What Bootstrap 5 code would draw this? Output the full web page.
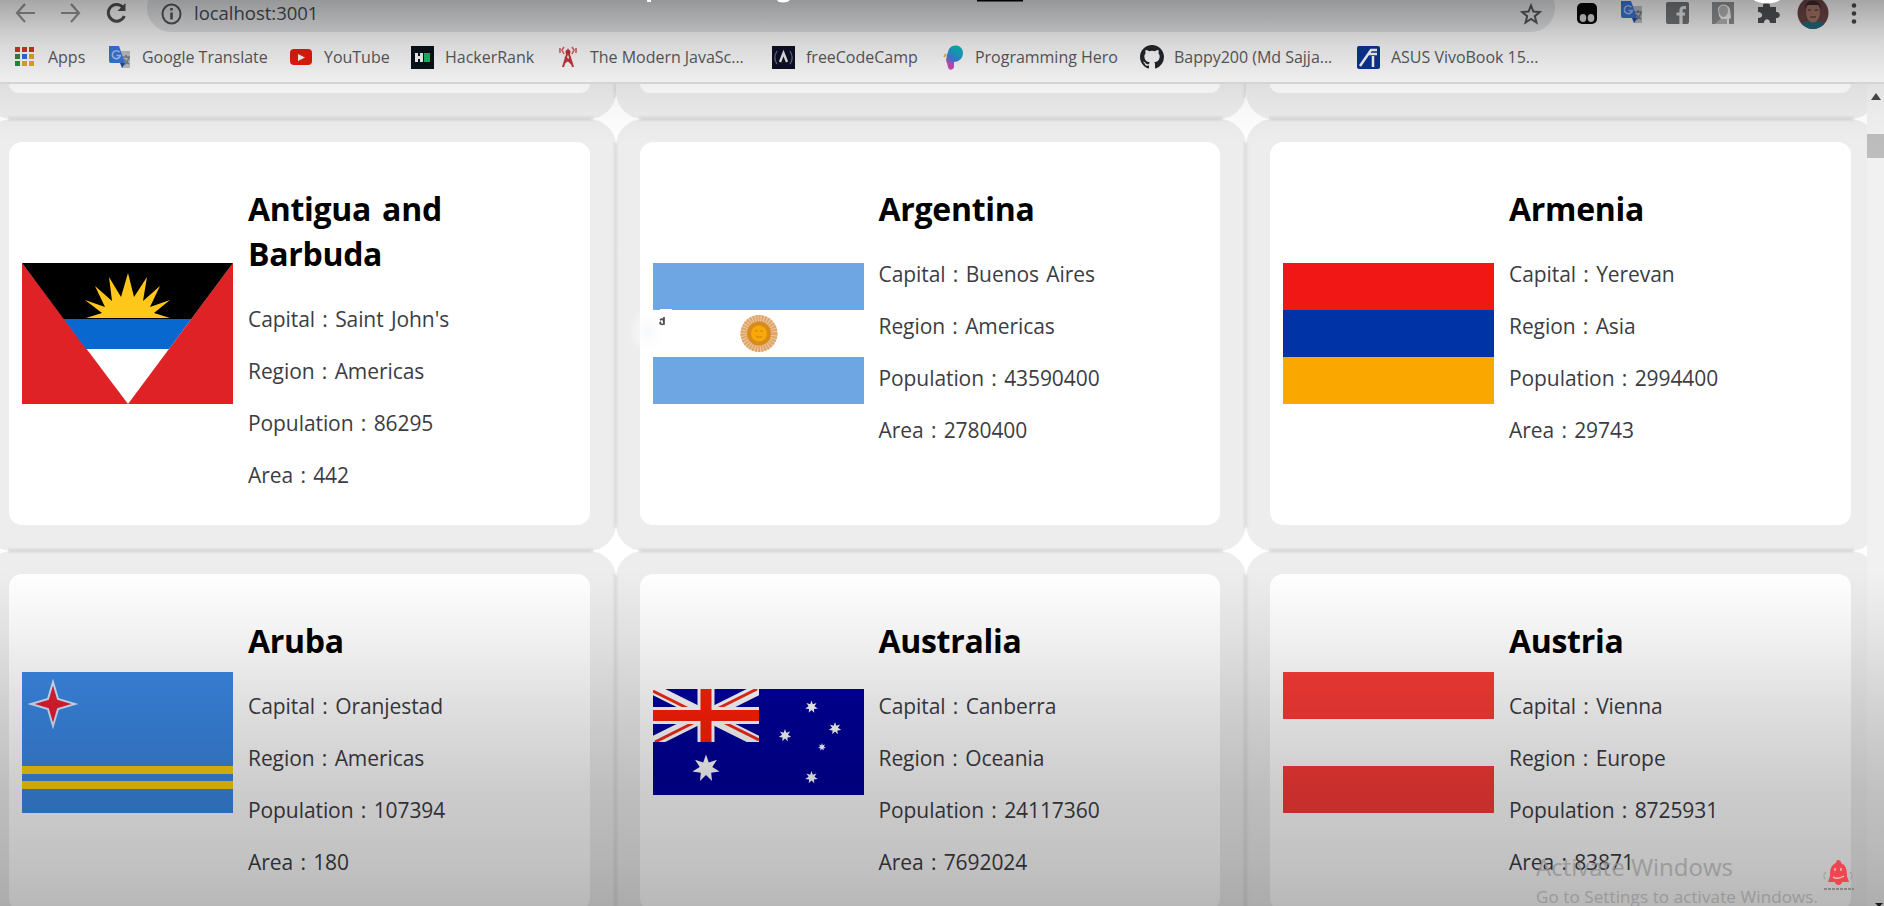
<!DOCTYPE html>
<html lang="en">
<head>
<meta charset="utf-8">
<title>Countries</title>
<link href="https://cdn.jsdelivr.net/npm/bootstrap@5.3.0/dist/css/bootstrap.min.css" rel="stylesheet">
<style>
html,body{height:906px;overflow:hidden}
body{font-family:"Open Sans","Noto Sans",sans-serif;background:#fff;color:#3c3c44;width:1884px}
svg{display:block;flex:none}
.shade-top{left:0;top:0;width:100%;height:145px;pointer-events:none;background:linear-gradient(rgba(0,0,0,.35) 0,rgba(0,0,0,.2) 32px,rgba(0,0,0,.15) 45px,rgba(0,0,0,.065) 80px,rgba(0,0,0,.03) 108px,transparent)}
.shade-bottom{left:0;bottom:0;width:100%;height:336px;pointer-events:none;background:linear-gradient(transparent 0,rgba(0,0,0,.055) 66px,rgba(0,0,0,.13) 140px,rgba(0,0,0,.2) 220px,rgba(0,0,0,.24) 290px,rgba(0,0,0,.28) 336px)}
.browser-top{height:84px;border-bottom:2px solid #e2e2e2}
.bar-row{height:32px;padding-left:15px}
.bar-row>svg{margin-top:2px}
.address{width:1408px;height:48px;margin:-16px 0 0 20px;padding:16px 13px 0 14px;border-radius:24px;background:#e5e7ea;color:#484b50;font-size:18.5px;letter-spacing:-.02px}
.address>*{margin-top:-6px}
.address svg{margin-top:-5px}
.address span{line-height:26px}
.ext{gap:22px;margin-left:21px}
.marks{height:50px;padding:0 0 0 14px;font-size:16px;letter-spacing:-.02px;color:#5b5c62}
.mk{gap:10px;white-space:nowrap}
.m1{width:94px}.m2{width:182px}.m3{width:121px}.m4{width:145px}.m5{width:216px}.m6{width:169px}.m7{width:199px}.m8{width:217px}
.viewport{height:822px}
.page-area{width:1867px;overflow:hidden}
.country-grid{display:grid;grid-template-columns:repeat(3,630.5px);grid-template-rows:35px 431.5px 386px;margin-left:-15px}
.cell{position:relative;border-radius:27px;padding:23px 26px 26px 24px;
background:linear-gradient(transparent,#d7d7d7) center bottom/calc(100% - 46px) 4px no-repeat,
linear-gradient(#d9d9d9,transparent) center top/calc(100% - 46px) 3px no-repeat,
linear-gradient(90deg,transparent,#dbdbdb) right center/4px calc(100% - 46px) no-repeat,
linear-gradient(90deg,#dfdfdf,transparent) left center/3px calc(100% - 46px) no-repeat,#ededed}
.cut{border-radius:0 0 27px 27px;padding-top:0;background:linear-gradient(transparent,#d9d9d9) center bottom/calc(100% - 46px) 4px no-repeat,linear-gradient(90deg,transparent,#dbdbdb) right top/4px 14px no-repeat,#ededed}
.panel{background:#fff;border-radius:13px;height:100%;padding-left:13px}
.cut .panel{border-radius:0 0 13px 13px}
.flagbox{width:211px}
.facts{width:260px;padding-top:44px;margin-left:15px;align-self:flex-start}
.facts h2{font-size:32px;line-height:45px;font-weight:700;color:#000;margin:0 0 28px;letter-spacing:-.3px;word-spacing:3px}
.facts p{font-size:21px;line-height:30px;margin:0 0 22px;white-space:nowrap;letter-spacing:-.08px;word-spacing:2px}
.scroller{width:17px;background:#f1f1f1}
.scroller .thumb{height:24px;background:#bdbdbd;margin-top:30px}
.notice{left:1536px;top:849px;color:#929292;white-space:nowrap;opacity:.8}
.notice .big{font-size:24px;line-height:36px}
.notice .sub{font-size:17px;line-height:20px;letter-spacing:.1px;margin-top:2px}
</style>
<script src="https://cdn.jsdelivr.net/npm/bootstrap@5.3.0/dist/js/bootstrap.bundle.min.js"></script>
</head>
<body class="position-relative">
<svg width="0" height="0" class="position-absolute"><defs>
<symbol id="translate" viewBox="0 0 24 24"><path d="M10 6h12v17H14z" fill="#c3c6ca"/><path d="M14 12h8M18 10v3M15 20c3-1 5-4 6-8M16 14c1 3 3 4 5 5" stroke="#7c858f" stroke-width="1.6" fill="none"/><path d="M1 1h10l6 17H3a2 2 0 0 1-2-2z" fill="#3b78e0"/><path d="m12 18 5 0-3 5z" fill="#2449a6"/><path d="M11.500 7.200a4 4 0 1 0 .8 3.300H8.500" stroke="#a9c6fa" stroke-width="1.600" fill="none"/></symbol>
<symbol id="star7" viewBox="-10 -10 20 20"><path fill="#fff" d="M0-10 2-4.200 7.800-6.200 4.500-1 9.700 2.200 3.700 3 4.300 9 0 4.700-4.300 9-3.700 3-9.700 2.200-4.500-1-7.800-6.200-2-4.200z"/></symbol>
</defs></svg>

<header class="browser-top bg-white overflow-hidden">
  <div class="bar-row d-flex align-items-start">
    <svg width="21" height="22" fill="none" stroke="#98999b" stroke-width="2.200"><path d="M20 11H2M10 2 2 11l8 9"/></svg>
    <svg class="ms-4" width="21" height="22" fill="none" stroke="#98999b" stroke-width="2.200"><path d="M1 11h18M11 2l8 9-8 9"/></svg>
    <svg class="ms-4" width="22" height="22" fill="none" stroke="#505254" stroke-width="3"><path d="M18 5.500A8.300 8.300 0 1 0 19.300 14"/><path d="M20.500 1v8h-8z" fill="#505254" stroke="none"/></svg>
    <div class="address d-flex align-items-center">
      <svg width="21" height="22" fill="none" stroke="#56585a" stroke-width="2"><ellipse cx="10.500" cy="11" rx="9" ry="9.500"/><path d="M10.500 9.500v7M10.500 5v2.400" stroke-width="2.600"/></svg>
      <span class="ms-2 ps-1">localhost:3001</span>
      <svg class="ms-auto" width="22" height="22" viewBox="0 0 22 22" fill="none" stroke="#56585a" stroke-width="2"><path d="m11 2.500 2.400 6 6.400.5-5 4.200 1.700 6.300-5.500-3.500-5.500 3.500 1.700-6.300-5-4.200 6.400-.5z"/></svg>
    </div>
    <div class="ext d-flex align-items-start">
      <svg width="22" height="24"><rect x="1" y="3" width="20" height="21" rx="5" fill="#080808"/><ellipse cx="7" cy="18" rx="3.300" ry="4" fill="#ddd"/><ellipse cx="15" cy="18" rx="3.300" ry="4" fill="#ddd"/></svg>
      <svg width="24" height="24"><use href="#translate"/></svg>
      <svg width="24" height="24"><rect y="2" width="23" height="22" rx="2" fill="#77797c"/><path d="M20 7.500h-2c-2 0-3 1-3 3V24M10.500 14H19" stroke="#eee" stroke-width="3.200" fill="none"/></svg>
      <svg width="24" height="24"><path d="M0 2h22v22h-5V19l2-1-1-9c-2-6-11-6-12 0l1 7 3 4-7 4H0z" fill="#939597"/><path d="M7 10c0-6 9-6 9 0 0 4-2 7-4.500 7S7 14 7 10M3 24l5-5h7v5z" fill="#bdbdbd"/></svg>
      <svg width="22" height="24"><path d="M0 7h5c-1-6 8-6 7 0h6v5c5-1 5 7 0 6v5h-6c0-5-6-5-6 0H0v-5c6 0 5-6 0-6z" fill="#535456"/></svg>
      <svg width="32" height="30" style="margin-left:-5px" viewBox="0 0 32 30"><defs><clipPath id="face"><ellipse cx="16" cy="13" rx="15.500" ry="16"/></clipPath></defs><g clip-path="url(#face)"><path fill="#6e4547" d="M0-4h32v36H0z"/><path fill="#206c7c" d="M0 32c1-10 8-11 16-11s15 2 16 11z"/><ellipse cx="16" cy="12" rx="7" ry="10.500" fill="#a97767"/><path d="M8 9C7-2 25-2 24 9l-2-4H10z" fill="#382b30"/><path d="M11 10h3m4 0h3M13 17h6" stroke="#654442" stroke-width="1.500"/></g></svg>
      <svg width="6" height="26" fill="#4a4c4e"><circle cx="3" cy="5.500" r="2.300"/><circle cx="3" cy="13.500" r="2.300"/><circle cx="3" cy="21.500" r="2.300"/></svg>
    </div>
  </div>
  <nav class="marks d-flex align-items-center">
    <div class="mk m1 d-flex align-items-center"><svg width="24" height="24" viewBox="0 0 24 24"><g fill="#d6362c"><path d="M1 2h5v5H1zM8 2h5v5H8zM15 2h5v5h-5z"/></g><path fill="#2c8b4c" d="M1 9h5v5H1zM1 16h5v5H1z"/><path fill="#2d75d6" d="M8 9h5v5H8z"/><path fill="#e5ad24" d="M15 9h5v5h-5zM8 16h5v5H8zM15 16h5v5h-5z"/></svg>Apps</div>
    <div class="mk m2 d-flex align-items-center"><svg width="24" height="24"><use href="#translate"/></svg>Google Translate</div>
    <div class="mk m3 d-flex align-items-center"><svg width="24" height="24"><rect y="4" width="22" height="16" rx="4" fill="#ed1d0c"/><path d="m8 9 7 3.500L8 16z" fill="#fff"/></svg>YouTube</div>
    <div class="mk m4 d-flex align-items-center"><svg width="24" height="24"><path d="M0 1h23v23H0z" fill="#07131a"/><path d="M4 8h3v3h2V8h3v9H9v-3H7v3H4z" fill="#fff"/><path fill="#21bd68" d="M13 8h6v9h-6z"/></svg>HackerRank</div>
    <div class="mk m5 d-flex align-items-center"><svg width="24" height="24" fill="none" stroke="#c8353b" stroke-width="2"><path d="m7 22 5-16 5 16M8 18l7-5M9 12l7 7"/><path d="M8 9 6 5l2-3M4 8V3M16 9l2-4-2-3M20 8V3" stroke="#d86268" stroke-width="1.600"/><circle cx="12" cy="7" r="1.500"/></svg>The Modern JavaSc...</div>
    <div class="mk m6 d-flex align-items-center"><svg width="24" height="24"><path d="M0 1h23v23H0z" fill="#0d1027"/><path d="M5 6c-3 5-3 9 0 13M18 6c3 5 3 9 0 13" stroke="#6b6c7d" fill="none" stroke-width="1.300"/><path d="m8 17 3.500-9 3.500 9" stroke="#eee" stroke-width="2.400" fill="none"/></svg>freeCodeCamp</div>
    <div class="mk m7 d-flex align-items-center"><svg width="24" height="25" viewBox="0 0 24 25"><defs><linearGradient id="ph" x1=".7" y1="0" x2=".2" y2="1"><stop offset=".2" stop-color="#12b4c4"/><stop offset=".55" stop-color="#3c82df"/><stop offset=".85" stop-color="#d54ab9"/></linearGradient></defs><path d="M8 4c4-6 14-4 14 4 0 6-5 9-9 9v5c-1 4-6 3-6 0l-2-7 1-5z" fill="url(#ph)"/><path d="M5 9 3 12" stroke="#e5ba4f" stroke-width="2"/></svg>Programming Hero</div>
    <div class="mk m8 d-flex align-items-center"><svg width="24" height="24" viewBox="0 0 16 16"><path fill="#25282b" d="M8 0C3.580 0 0 3.580 0 8c0 3.540 2.290 6.530 5.470 7.590.4.070.55-.17.55-.38 0-.19-.01-.82-.01-1.490-2.010.37-2.530-.49-2.690-.94-.09-.23-.48-.94-.82-1.130-.28-.15-.68-.52-.01-.53.63-.01 1.080.58 1.230.82.72 1.210 1.870.87 2.330.66.070-.52.28-.87.51-1.070-1.780-.2-3.640-.89-3.640-3.950 0-.87.31-1.590.82-2.150-.08-.2-.36-1.020.08-2.120 0 0 .67-.21 2.200.82a7.600 7.600 0 0 1 4 0c1.530-1.040 2.200-.82 2.200-.82.44 1.100.16 1.920.08 2.120.51.56.82 1.270.82 2.150 0 3.070-1.870 3.750-3.650 3.950.29.25.54.73.54 1.480 0 1.070-.01 1.930-.01 2.200 0 .21.15.46.55.38A8 8 0 0 0 16 8c0-4.420-3.580-8-8-8"/></svg>Bappy200 (Md Sajja...</div>
    <div class="mk d-flex align-items-center"><svg width="24" height="24"><rect y="1" width="23" height="23" rx="2" fill="#0b3695"/><path d="M3 21 14 5h6M11 9h9M16 11v11" stroke="#fff" stroke-width="2.500" fill="none"/></svg>ASUS VivoBook 15...</div>
  </nav>
</header>

<div class="viewport d-flex">
<main class="page-area"><div class="country-grid">
  <div class="cell cut"><div class="panel"></div></div><div class="cell cut"><div class="panel"></div></div><div class="cell cut"><div class="panel"></div></div>

  <article class="cell"><div class="panel d-flex align-items-center">
    <svg class="flagbox" height="141" viewBox="0 0 211 141"><path fill="#df2226" d="M0 0h211v141H0z"/><path d="M0 0h211L106 141z" fill="#fff"/><path d="M0 0h211L169.300 56H41.700z" fill="#000"/><path d="M41.700 56h127.600L147 86H64z" fill="#0868cf"/><path fill="#ffc719" d="m64 55 16-5-17-13 20 7-10-21 17 15-3-24 12 20 7-24 6 24 13-20-4 24 17-15-10 21 20-7-16 13 16 5z"/></svg>
    <div class="facts"><h2>Antigua and Barbuda</h2><p>Capital : Saint John's</p><p>Region : Americas</p><p>Population : 86295</p><p>Area : 442</p></div>
  </div></article>

  <article class="cell"><div class="panel d-flex align-items-center">
    <svg class="flagbox" height="141" viewBox="0 0 211 141"><path fill="#6da6e2" d="M0 0h211v141H0z"/><path fill="#fff" d="M0 47h211v47H0z"/><circle cx="106" cy="70.500" r="18.500" fill="#eec9a2"/><circle cx="106" cy="70.500" r="15" fill="none" stroke="#dfa468" stroke-width="7" stroke-dasharray="1.800 1"/><circle cx="106" cy="70.500" r="12" fill="#d78b1b"/><circle cx="106" cy="70.500" r="8" fill="#f9a80a"/><path d="M102 68h3m2 0h3M103 74h6" stroke="#cf850c"/></svg>
    <div class="facts"><h2>Argentina</h2><p>Capital : Buenos Aires</p><p>Region : Americas</p><p>Population : 43590400</p><p>Area : 2780400</p></div>
  </div></article>

  <article class="cell"><div class="panel d-flex align-items-center">
    <svg class="flagbox" height="141" viewBox="0 0 211 141"><path fill="#f01714" d="M0 0h211v47H0z"/><path fill="#0033a6" d="M0 47h211v47H0z"/><path fill="#faa700" d="M0 94h211v47H0z"/></svg>
    <div class="facts"><h2>Armenia</h2><p>Capital : Yerevan</p><p>Region : Asia</p><p>Population : 2994400</p><p>Area : 29743</p></div>
  </div></article>

  <article class="cell"><div class="panel d-flex align-items-center">
    <svg class="flagbox" height="141" viewBox="0 0 211 141"><path fill="#3b88e5" d="M0 0h211v141H0z"/><path fill="#ffd008" d="M0 94h211v8H0zM0 109h211v8H0z"/><path d="m31 10 5 17 17 5-17 5-5 17-5-17-17-5 17-5z" fill="#e81d32" stroke="#d4e6ff" stroke-width="2"/></svg>
    <div class="facts"><h2>Aruba</h2><p>Capital : Oranjestad</p><p>Region : Americas</p><p>Population : 107394</p><p>Area : 180</p></div>
  </div></article>

  <article class="cell"><div class="panel d-flex align-items-center">
    <svg class="flagbox" height="106" viewBox="0 0 211 106"><path fill="#00009b" d="M0 0h211v106H0z"/><svg width="106" height="53" viewBox="0 0 106 53"><path d="m0 0 106 53M106 0 0 53" stroke="#fff" stroke-width="11"/><path d="m0 2 44 22M64 20 104 0M66 31l40 20M2 53 42 33" stroke="#f22a18" stroke-width="3"/><path d="M53 0v53M0 26.500h106" stroke="#fff" stroke-width="17"/><path d="M53 0v53M0 26.500h106" stroke="#ff1f08" stroke-width="11"/></svg><use href="#star7" x="39" y="65" width="28" height="29"/><use href="#star7" x="152" y="11.500" width="13" height="13"/><use href="#star7" x="125.500" y="40" width="13" height="13"/><use href="#star7" x="175.500" y="33" width="13" height="13"/><use href="#star7" x="165" y="54" width="8" height="8"/><use href="#star7" x="152" y="82" width="13" height="13"/></svg>
    <div class="facts"><h2>Australia</h2><p>Capital : Canberra</p><p>Region : Oceania</p><p>Population : 24117360</p><p>Area : 7692024</p></div>
  </div></article>

  <article class="cell"><div class="panel d-flex align-items-center">
    <svg class="flagbox" height="141" viewBox="0 0 211 141"><path fill="#fb3b37" d="M0 0h211v47H0zM0 94h211v47H0z"/></svg>
    <div class="facts"><h2>Austria</h2><p>Capital : Vienna</p><p>Region : Europe</p><p>Population : 8725931</p><p>Area : 83871</p></div>
  </div></article>
</div></main>
<aside class="scroller d-flex flex-column">
  <svg width="17" height="20"><path d="M4 16h10L9 9z" fill="#484848"/></svg>
  <div class="thumb"></div>
  <svg class="mt-auto" width="17" height="4"><path d="M8 1h8l-4 4z" fill="#222"/></svg>
</aside>
</div>

<div class="shade-top position-absolute"></div>
<div class="shade-bottom position-absolute"></div>
<!-- player overlay remnants and pointer -->
<svg class="position-absolute top-0 start-0" width="1884" height="6"><path d="M977 0h46v1.500h-46z" fill="#000"/><g fill="#fff"><path d="M647 0h4v2h-4zM777 0h13q-2 2.500-7 2.500T777 0"/><ellipse cx="1767" cy="-6" rx="17" ry="9.500"/></g></svg>
<svg class="position-absolute" style="left:626px;top:305px" width="50" height="55"><defs><radialGradient id="halo"><stop stop-color="#f6f7f9"/><stop offset="1" stop-color="#fff" stop-opacity="0"/></radialGradient></defs><ellipse cx="22" cy="26" rx="20" ry="24" fill="url(#halo)"/><path d="M34 4h12v6H34z" fill="#fff"/><path d="M38 12v7M34 15c3-2 4 0 4 4-4 1-5-1-3-2" stroke="#4b4b59" stroke-width="1.700" fill="none"/></svg>
<div class="notice position-absolute"><div class="big">Activate Windows</div><div class="sub">Go to Settings to activate Windows.</div></div>
<svg class="position-absolute" style="left:1822px;top:859px" width="33" height="32" viewBox="0 0 33 32"><path d="M16 1c2 0 3 1 3 3 5 2 6 7 6 13l2 6H6l2-6c0-7 1-11 6-13 0-2 1-3 2-3M13 23h7c0 4-7 4-7 0" fill="#ef4650"/><path d="M13 9v3M19 9v3M11 18q5 3 11-1" stroke="#f7b9bb" stroke-width="1.500" fill="none"/><path d="M4 13q-4 4 0 8M28 13q4 4 0 8" stroke="#8b8b8b" stroke-dasharray="2 1" fill="none"/><path d="M2 30h30" stroke="#777" stroke-width="1.500" stroke-dasharray="3 1"/></svg>
</body>
</html>
